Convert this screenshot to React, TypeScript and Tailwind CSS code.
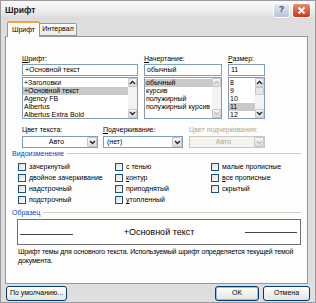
const Chevron = ({ dir, disabled }: { dir: 'up' | 'down'; disabled?: boolean }) => (
  <svg width="7" height="5" viewBox="0 0 7 5">
    <path
      d={dir === 'up' ? 'M1 4 L3.5 1.5 L6 4' : 'M1 1 L3.5 3.5 L6 1'}
      fill="none"
      stroke={disabled ? '#c2c2c2' : '#222'}
      strokeWidth="1.4"
    />
  </svg>
);

const ScrollButton = ({ dir, disabled }: { dir: 'up' | 'down'; disabled?: boolean }) => (
  <div className="w-[9px] h-[9px] flex items-center justify-center rounded-[1px] border border-[#c3c7cf] bg-gradient-to-b from-[#f7f7f7] to-[#dcdcdc]">
    <Chevron dir={dir} disabled={disabled} />
  </div>
);

const ScrollBar = ({ thumb, disabled }: { thumb?: boolean; disabled?: boolean }) => (
  <div className="w-[9px] h-full flex flex-col bg-[#f3f3f1]">
    <ScrollButton dir="up" disabled={disabled} />
    <div className="flex-1">
      {thumb && <div className="h-[8px] rounded-[1px] border border-[#c3c7cf] bg-[#e6e6e6]" />}
    </div>
    <ScrollButton dir="down" disabled={disabled} />
  </div>
);

const ListBox = ({ items, selected, thumb, disabled }: { items: string[]; selected: number; thumb?: boolean; disabled?: boolean }) => (
  <div className="mt-[1px] h-[42px] flex border border-[#7f9db9] bg-white">
    <div className="flex-1 pt-[1px] overflow-hidden">
      {items.map((item, i) => (
        <div key={item} className={`h-[8px] leading-[8px] pl-[1px] whitespace-nowrap ${i === selected ? 'bg-[#c9c9c9]' : ''}`}>
          {item}
        </div>
      ))}
    </div>
    <ScrollBar thumb={thumb} disabled={disabled} />
  </div>
);

const TextInput = ({ value }: { value: string }) => (
  <div className="mt-[1px] h-[12px] leading-[10px] pl-[2px] border border-[#7f9db9] bg-white">{value}</div>
);

const Combo = ({ value, center, disabled, width }: { value: string; center?: boolean; disabled?: boolean; width: string }) => (
  <div
    className={`${width} mt-[2px] h-[12px] flex border ${
      disabled ? 'border-[#c9c7ba] bg-[#f4f3ee] text-[#aca899]' : 'border-[#7f9db9] bg-white'
    }`}
  >
    <div className={`flex-1 leading-[10px] pl-[3px] ${center ? 'text-center' : ''}`}>{value}</div>
    <div className="w-[10px] h-full flex items-center justify-center rounded-[1px] border border-[#c3c7cf] bg-gradient-to-b from-[#f7f7f7] to-[#dcdcdc]">
      <Chevron dir="down" disabled={disabled} />
    </div>
  </div>
);

const Check = ({ label }: { label: React.ReactNode }) => (
  <div className="h-[11px] flex items-center">
    <div className="w-[8px] h-[8px] border border-[#1c5180] bg-gradient-to-br from-[#dcdcd7] to-white" />
    <span className="ml-[3px] leading-[9px]">{label}</span>
  </div>
);

const GroupHeader = ({ title }: { title: string }) => (
  <div className="h-[9px] flex items-center">
    <span className="text-[#0046d5] leading-[9px]">{title}</span>
    <div className="flex-1 ml-[3px] mr-[2px] h-px bg-[#d0d0bf]" />
  </div>
);

const Button = ({ children, width, focused }: { children: React.ReactNode; width: string; focused?: boolean }) => (
  <div
    className={`${width} h-[15px] flex items-center justify-center rounded-[3px] border border-[#003c74] bg-gradient-to-b from-white to-[#e6e5de] ${
      focused ? 'shadow-[inset_0_0_0_1px_#9ebaf0]' : ''
    }`}
  >
    {children}
  </div>
);

export default function App() {
  return (
    <div className="w-[316px] h-[303px] flex flex-col bg-[#dedede] border border-[#9a9a9a] text-[7px] text-black font-['Liberation_Sans',Arial,sans-serif] overflow-hidden">
      {/* title bar */}
      <div className="h-[18px] flex items-center pl-[4px] pr-[4px] bg-gradient-to-b from-[#fbfbfb] via-[#eeeeee] to-[#d9d9d9]">
        <span className="font-bold text-[8.5px] text-[#1a1a1a]">Шрифт</span>
        <div className="flex-1" />
        <div className="w-[17px] h-[15px] flex items-center justify-center rounded-[3px] border border-white bg-gradient-to-b from-[#e7ecf4] to-[#b6c2d6] text-[9px] font-bold text-[#3a4a6a]">
          ?
        </div>
        <div className="ml-[2px] w-[19px] h-[15px] flex items-center justify-center rounded-[3px] border border-white bg-gradient-to-b from-[#e98a6a] to-[#c8381a]">
          <svg width="9" height="9" viewBox="0 0 9 9">
            <path d="M1.5 1.5 L7.5 7.5 M7.5 1.5 L1.5 7.5" stroke="white" strokeWidth="1.8" />
          </svg>
        </div>
      </div>

      <div className="flex-1 px-[4px] pt-[2px]">
        {/* tabs */}
        <div className="h-[15px] flex items-end pl-[2px]">
          <div className="relative z-10 -mb-px w-[33px] h-[16px] flex items-center justify-center border border-b-0 border-[#919b9c] border-t-2 border-t-[#f3a23a] bg-[#fcfcfc] rounded-t-[2px]">
            Шрифт
          </div>
          <div className="w-[37px] h-[13px] flex items-center justify-center border border-l-0 border-[#919b9c] bg-gradient-to-b from-white to-[#ecebe5] rounded-tr-[2px]">
            Интервал
          </div>
        </div>

        {/* panel */}
        <div className="h-[248px] w-[303px] border border-[#919b9c] bg-[#fdfdfd] pl-[6px] pr-[4px] pt-[17px]">
          <div className="pl-[10px] flex gap-[6px]">
            <div className="w-[116px]">
              <div className="h-[9px] leading-[9px]"><u>Ш</u>рифт:</div>
              <TextInput value="+Основной текст" />
              <ListBox items={['+Заголовки', '+Основной текст', 'Agency FB', 'Albertus', 'Albertus Extra Bold']} selected={1} />
            </div>
            <div className="w-[78px]">
              <div className="h-[9px] leading-[9px]"><u>Н</u>ачертание:</div>
              <TextInput value="обычный" />
              <ListBox items={['обычный', 'курсив', 'полужирный', 'полужирный курсив']} selected={0} disabled />
            </div>
            <div className="w-[37px]">
              <div className="h-[9px] leading-[9px]"><u>Р</u>азмер:</div>
              <TextInput value="11" />
              <ListBox items={['8', '9', '10', '11', '12']} selected={3} thumb />
            </div>
          </div>

          {/* combos */}
          <div className="pl-[10px] mt-[6px] flex">
            <div className="w-[81px]">
              <div className="h-[9px] leading-[9px]">Цвет текста:</div>
              <Combo value="Авто" center width="w-[76px]" />
            </div>
            <div className="w-[86px]">
              <div className="h-[9px] leading-[9px]"><u>П</u>одчеркивание:</div>
              <Combo value="(нет)" width="w-[80px]" />
            </div>
            <div>
              <div className="h-[9px] leading-[9px] text-[#aca899]">Цвет подчеркивания:</div>
              <Combo value="Авто" center disabled width="w-[76px]" />
            </div>
          </div>

          {/* effects */}
          <div className="mt-[1px]">
            <GroupHeader title="Видоизменение" />
          </div>
          <div className="mt-[3px] pl-[6px] flex">
            <div className="w-[97px]">
              <Check label="зачеркнутый" />
              <Check label="двойное зачеркивание" />
              <Check label="надстрочный" />
              <Check label="подстрочный" />
            </div>
            <div className="w-[96px]">
              <Check label="с тенью" />
              <Check label={<><u>к</u>онтур</>} />
              <Check label="приподнятый" />
              <Check label={<><u>у</u>топленный</>} />
            </div>
            <div>
              <Check label="малые прописные" />
              <Check label={<><u>в</u>се прописные</>} />
              <Check label="скрытый" />
            </div>
          </div>

          {/* sample */}
          <div className="mt-[3px]">
            <GroupHeader title="Образец" />
          </div>
          <div className="mt-[2px] ml-[5px] w-[284px] h-[26px] flex items-center border border-[#707070] bg-white">
            <div className="ml-[2px] w-[53px] h-px mt-[4px] bg-[#444]" />
            <div className="flex-1 text-center text-[9px] leading-[10px]">+Основной текст</div>
            <div className="mr-[3px] w-[52px] h-px bg-[#444]" />
          </div>
          <div className="mt-[2px] ml-[6px] leading-[9px] whitespace-nowrap tracking-[-0.15px]">
            Шрифт темы для основного текста. Используемый шрифт определяется текущей темой
            <br />
            документа.
          </div>
        </div>

        {/* buttons */}
        <div className="mt-[2px] flex items-center">
          <div className="ml-[1px]">
            <Button width="w-[61px]">По умолчанию...</Button>
          </div>
          <div className="flex-1" />
          <Button width="w-[44px]" focused>OK</Button>
          <div className="ml-[4px] mr-[1px]">
            <Button width="w-[47px]">Отмена</Button>
          </div>
        </div>
      </div>
    </div>
  );
}
